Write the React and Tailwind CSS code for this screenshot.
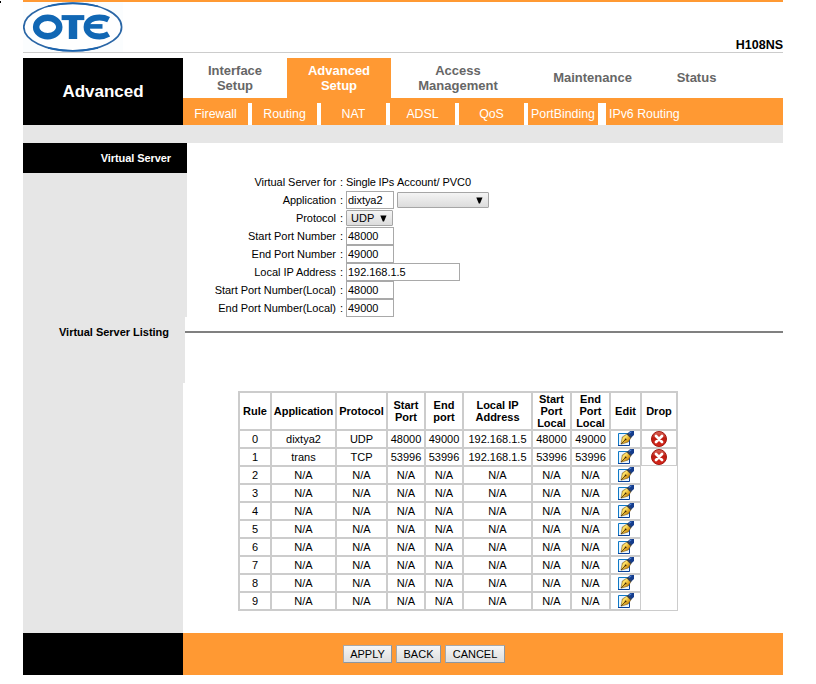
import React from "react";

const tabs = [
  { label: ["Interface", "Setup"], width: "w-[104px]" },
  { label: ["Advanced", "Setup"], width: "w-[104px]", active: true },
  { label: ["Access", "Management"], width: "w-[134px]" },
  { label: ["Maintenance"], width: "w-[135px] pb-[2px]" },
  { label: ["Status"], width: "w-[73px] pb-[2px]" },
];

const subTabs = [
  { label: "Firewall", cls: "w-[65px]" },
  { label: "Routing", cls: "w-[65px]" },
  { label: "NAT", cls: "w-[65px]" },
  { label: "ADSL", cls: "w-[65px]" },
  { label: "QoS", cls: "w-[65px]" },
  { label: "PortBinding", cls: "w-[70px]" },
];

const columns = [
  { label: "Rule", width: "w-[32px]" },
  { label: "Application", width: "w-[65px] tracking-[-0.05px]" },
  { label: "Protocol", width: "w-[51px]" },
  { label: "Start\nPort", width: "w-[38px]" },
  { label: "End\nport", width: "w-[38px]" },
  { label: "Local IP\nAddress", width: "w-[69px]" },
  { label: "Start\nPort\nLocal", width: "w-[39px]" },
  { label: "End\nPort\nLocal", width: "w-[39px]" },
  { label: "Edit", width: "w-[31px]" },
  { label: "Drop", width: "w-[36px]" },
];

const rules = [
  ["dixtya2", "UDP", "48000", "49000", "192.168.1.5", "48000", "49000"],
  ["trans", "TCP", "53996", "53996", "192.168.1.5", "53996", "53996"],
  ...Array.from({ length: 8 }, () => Array(7).fill("N/A")),
];

function Logo() {
  return (
    <svg width="100" height="50" viewBox="0 0 100 50" className="block">
      <rect width="100" height="50" fill="#fbfdfe" />
      <ellipse cx="49.7" cy="25" rx="48.9" ry="24" fill="#fff" stroke="#2a66a6" strokeWidth="1.7" />
      <path d="M25 4.3Q49.7 -1.6 75 4.3M25 45.9Q49.7 51.6 75 45.9" fill="none" stroke="#1c64ae" strokeWidth="1.6" />
      <ellipse cx="24.7" cy="25" rx="11.6" ry="9.3" fill="none" stroke="#1167b4" strokeWidth="6.4" />
      <path d="M38.6 15.6H61.3" stroke="#1167b4" strokeWidth="5" />
      <path d="M50 14V37" stroke="#1167b4" strokeWidth="8.4" />
      <path d="M85.6 17.6C82.5 16 80 15.5 76.5 15.5C68.5 15.5 63.6 19.4 63.6 25C63.6 30.6 68.5 34.4 76.5 34.4C80 34.4 82.5 33.8 85.6 32" fill="none" stroke="#1167b4" strokeWidth="6" />
      <path d="M63 24.4H79.5" stroke="#1167b4" strokeWidth="4.6" />
    </svg>
  );
}

function EditIcon() {
  return (
    <svg width="17" height="16" viewBox="0 0 17 16" className="block shrink-0">
      <defs>
        <linearGradient id="nib" x1="0" y1="0" x2="1" y2="1">
          <stop offset="0" stopColor="#a87818" />
          <stop offset=".35" stopColor="#ffe468" />
          <stop offset=".65" stopColor="#dba01e" />
          <stop offset="1" stopColor="#6a400a" />
        </linearGradient>
      </defs>
      <rect x=".5" y="2.5" width="11" height="12" fill="#e9f6ff" />
      <path d="M.5 15V2.5H12" fill="none" stroke="#1079c6" />
      <path d="M0 14.5H11.5V2.5" fill="none" stroke="#08409a" />
      <path d="M3 13.2L4.3 6L9 3L12.8 7L10.3 11Z" fill="url(#nib)" stroke="#6b4710" strokeWidth=".5" />
      <path d="M3.2 13L7.2 8.8" stroke="#3a2406" strokeWidth=".8" />
      <circle cx="7.6" cy="8.4" r=".9" fill="#3a2206" />
      <path d="M8.6 3.2L10.2 1.8L14.2 5.6L12.9 7.4Z" fill="#3a414c" />
      <path d="M10 2L12.2 0H16V4L13.8 6Z" fill="#143c8c" />
      <path d="M11.2 2.4L13.4 .6" stroke="#4f86dc" strokeWidth="1.2" />
    </svg>
  );
}

function DropIcon() {
  return (
    <svg width="16" height="16" viewBox="0 0 16 16" className="block shrink-0">
      <defs>
        <linearGradient id="red" x1="0" y1="0" x2="0" y2="1">
          <stop offset="0" stopColor="#dc6a5c" />
          <stop offset=".45" stopColor="#bd1c12" />
          <stop offset="1" stopColor="#d8281c" />
        </linearGradient>
      </defs>
      <circle cx="8" cy="8" r="7.5" fill="url(#red)" stroke="#a3170f" />
      <path d="M5 5L11 11M11 5L5 11" stroke="#fff" strokeWidth="2.8" strokeLinecap="round" />
    </svg>
  );
}

function Field({ value, wide }) {
  return (
    <input
      type="text"
      defaultValue={value}
      className={
        "block h-[18px] border border-[#a9a9a9] bg-white px-px py-0 text-[11px] leading-[14px] tracking-[-0.05px] text-black outline-none " +
        (wide ? "w-[114px]" : "w-[48px]")
      }
    />
  );
}

function Picker({ value, cls }) {
  return (
    <button
      className={
        "flex h-4 items-center justify-between rounded-[1px] border border-[#a6a6a6] bg-linear-to-b from-[#f4f4f4] to-[#dcdcdc] pl-1 pr-[5px] text-[11px] leading-[14px] text-black " +
        cls
      }
    >
      <span>{value}</span>
      <svg width="7" height="7" viewBox="0 0 7 7">
        <path d="M.3 .5H6.5L4 6.5H2.8Z" fill="#000" />
      </svg>
    </button>
  );
}

function FormRow({ label, children }) {
  return (
    <div className="flex h-[18px] items-center text-[11px] leading-[18px]">
      <div className="w-[149px] text-right tracking-[-0.04px]">{label}</div>
      <div className="w-[10px] pl-[4px]">:</div>
      <div className="flex items-center gap-[3px]">{children}</div>
    </div>
  );
}

function ActionButton({ children, cls }) {
  return (
    <button
      className={
        "h-[18px] border border-[#a8a8a8] border-r-[#8c96a0] border-b-[#8c96a0] bg-linear-to-b from-[#f6f6f6] to-[#dddddd] text-center text-[11px] leading-[16px] text-black " +
        cls
      }
    >
      {children}
    </button>
  );
}

export default function App() {
  return (
    <div className="flex h-[684px] w-[816px] overflow-hidden bg-white font-['Liberation_Sans',Arial,sans-serif] text-black">
      <div className="w-[23px] shrink-0 pt-px">
        <div className="h-[2px] w-px bg-black" />
      </div>
      <div className="w-[760px] shrink-0">
        <header className="flex h-[53px] items-start justify-between border-t-2 border-b border-t-[#ff9933] border-b-[#cccccc]">
          <Logo />
          <div className="mt-[36px] text-[12.5px] leading-[14px] font-bold">H108NS</div>
        </header>

        <nav className="mt-[5px] flex h-[67px]">
          <div className="flex w-[160px] items-center justify-center bg-black text-[17px] font-bold text-white">
            Advanced
          </div>
          <div className="w-[600px]">
            <div className="flex h-10">
              {tabs.map((t) => (
                <div
                  key={t.label[0]}
                  className={
                    "flex flex-col items-center justify-center text-[13px] leading-[15px] font-bold " +
                    t.width +
                    (t.active ? " bg-[#ff9933] text-white" : " text-[#666666]")
                  }
                >
                  {t.label.map((l) => (
                    <span key={l}>{l}</span>
                  ))}
                </div>
              ))}
            </div>
            <div className="flex h-[27px] bg-[#ff9933] pt-[5px] text-[12.35px] leading-[22px] text-white">
              {subTabs.map((s, i) => (
                <React.Fragment key={s.label}>
                  <div className={"text-center " + s.cls}>{s.label}</div>
                  <div className={i === 5 ? "w-2 bg-white" : "w-1 bg-white"} />
                </React.Fragment>
              ))}
              <div className="pl-[3px]">IPv6 Routing</div>
            </div>
          </div>
        </nav>

        <div className="h-[18px] bg-[#e6e6e6]" />

        <section className="flex h-[174px]">
          <div className="w-[164px] bg-[#e6e6e6]">
            <div className="h-[30px] bg-black pr-4 text-right text-[11px] leading-[30px] font-bold tracking-[-0.08px] text-white">
              Virtual Server
            </div>
          </div>
          <div className="pt-[30px]">
            <FormRow label="Virtual Server for">
              <span className="w-[48px] tracking-[-0.15px] whitespace-nowrap">Single IPs</span>
              <span className="tracking-[-0.05px]">Account/ PVC0</span>
            </FormRow>
            <FormRow label="Application">
              <Field value="dixtya2" />
              <Picker value="" cls="w-[92px]" />
            </FormRow>
            <FormRow label="Protocol">
              <Picker value="UDP" cls="w-[47px]" />
            </FormRow>
            <FormRow label="Start Port Number"><Field value="48000" /></FormRow>
            <FormRow label="End Port Number"><Field value="49000" /></FormRow>
            <FormRow label="Local IP Address"><Field value="192.168.1.5" wide /></FormRow>
            <FormRow label="Start Port Number(Local)"><Field value="48000" /></FormRow>
            <FormRow label="End Port Number(Local)"><Field value="49000" /></FormRow>
          </div>
        </section>

        <section className="flex h-[66px]">
          <div className="w-[162px] bg-[#e6e6e6] pr-4 text-right text-[11px] leading-[30px] font-bold tracking-[-0.02px]">
            Virtual Server Listing
          </div>
          <div className="mt-[14px] h-[2px] grow bg-[#808080]" />
        </section>

        <section className="flex h-[250px]">
          <div className="w-[160px] bg-[#e6e6e6]" />
          <div className="pt-2 pl-[55px]">
            <table className="w-[440px] table-fixed border-separate border-spacing-0 border border-[#cccccc] text-center text-[11px]">
              <thead>
                <tr className="h-[38px]">
                  {columns.map((c) => (
                    <th
                      key={c.label}
                      className={
                        "border border-[#cccccc] p-0 align-middle leading-[12px] font-bold whitespace-pre " + c.width
                      }
                    >
                      {c.label}
                    </th>
                  ))}
                </tr>
              </thead>
              <tbody>
                {rules.map((r, i) => (
                  <tr key={i} className="h-[18px]">
                    {[i, ...r].map((v, j) => (
                      <td key={j} className="h-[18px] border border-[#cccccc] p-0 leading-[16px]">
                        {v}
                      </td>
                    ))}
                    <td className="h-[18px] border border-[#cccccc] p-0">
                      <div className="flex h-4 pl-[7px]">
                        <EditIcon />
                      </div>
                    </td>
                    {i < 2 && (
                      <td className="h-[18px] border border-[#cccccc] p-0">
                        <div className="flex h-4 justify-center">
                          <DropIcon />
                        </div>
                      </td>
                    )}
                  </tr>
                ))}
              </tbody>
            </table>
          </div>
        </section>

        <footer className="flex h-[42px]">
          <div className="w-[160px] bg-black" />
          <div className="flex grow items-center gap-1 bg-[#ff9933] pl-[160px]">
            <ActionButton cls="w-[49px]">APPLY</ActionButton>
            <ActionButton cls="w-[45px]">BACK</ActionButton>
            <ActionButton cls="w-[60px]">CANCEL</ActionButton>
          </div>
        </footer>
      </div>
    </div>
  );
}
